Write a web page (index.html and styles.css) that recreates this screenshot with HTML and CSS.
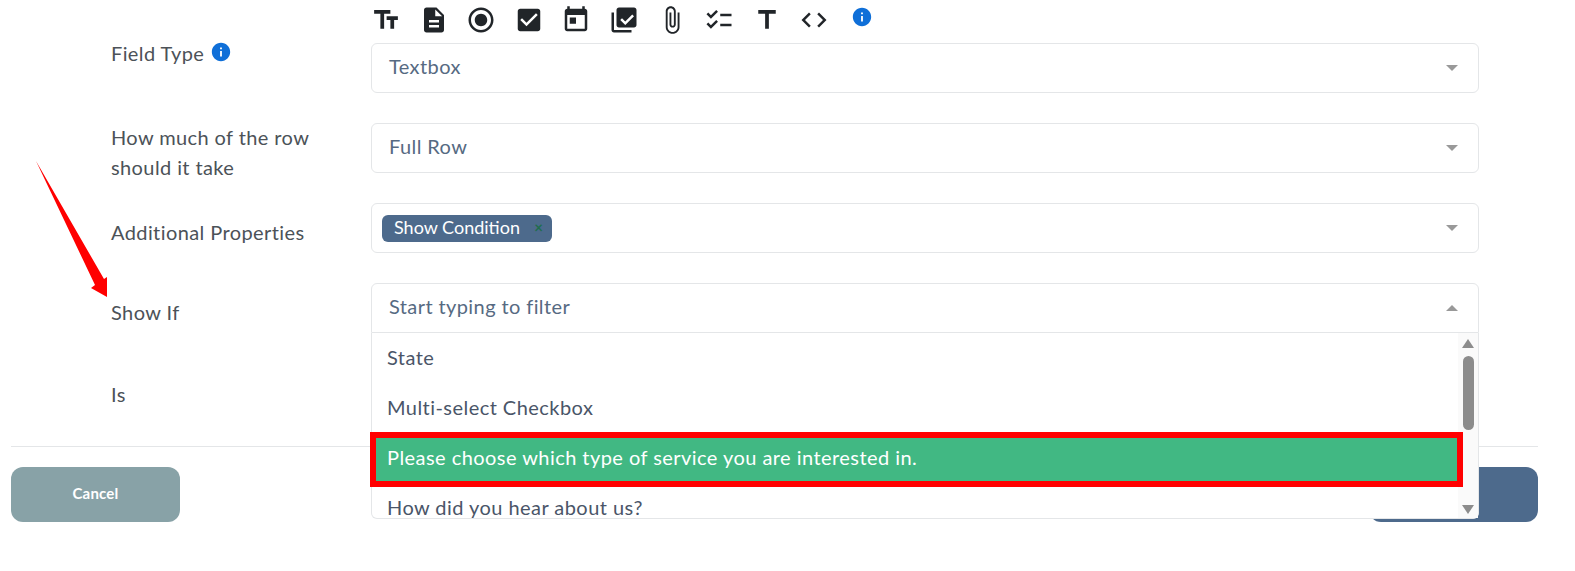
FILE: index.html
```html
<!DOCTYPE html>
<html lang="en">
<head>
    <meta charset="UTF-8">
    <meta name="viewport" content="width=device-width, initial-scale=1.0">
    <title>Field Settings</title>
    <link rel="stylesheet" href="styles.css">
</head>
<body>
    <div class="page">
        <div class="form-rows">
            <div class="form-row">
                <div class="field-label">Field Type
                    <svg class="info-icon" viewBox="0 0 24 24"><path d="M12 2C6.48 2 2 6.48 2 12s4.48 10 10 10 10-4.48 10-10S17.52 2 12 2zm1 15h-2v-6h2v6zm0-8h-2V7h2v2z"/></svg>
                </div>
                <div class="field-col">
                    <div class="type-icons">
                        <svg class="type-icon" viewBox="0 0 24 24"><path d="M2.5 4v3h5v12h3V7h5V4h-13zm19 5h-9v3h3v7h3v-7h3V9z"/></svg>
                        <svg class="type-icon" viewBox="0 0 24 24"><path d="M14 2H6c-1.1 0-1.99.9-1.99 2L4 20c0 1.1.89 2 1.99 2H18c1.1 0 2-.9 2-2V8l-6-6zm2 16H8v-2h8v2zm0-4H8v-2h8v2zm-3-5V3.5L18.5 9H13z"/></svg>
                        <svg class="type-icon" viewBox="0 0 24 24"><path d="M12 7c-2.76 0-5 2.24-5 5s2.24 5 5 5 5-2.24 5-5-2.24-5-5-5zm0-5C6.48 2 2 6.48 2 12s4.48 10 10 10 10-4.48 10-10S17.52 2 12 2zm0 18c-4.42 0-8-3.58-8-8s3.58-8 8-8 8 3.58 8 8-3.58 8-8 8z"/></svg>
                        <svg class="type-icon" viewBox="0 0 24 24"><path d="M19 3H5c-1.11 0-2 .9-2 2v14c0 1.1.89 2 2 2h14c1.11 0 2-.9 2-2V5c0-1.1-.89-2-2-2zm-9 14l-5-5 1.41-1.41L10 14.17l7.59-7.59L19 8l-9 9z"/></svg>
                        <svg class="type-icon" viewBox="0 0 24 24"><path fill-rule="evenodd" d="M7 1v2h10V1h2v2c1.1 0 2 .9 2 2v14c0 1.1-.9 2-2 2H5c-1.1 0-2-.9-2-2V5c0-1.1.9-2 2-2V1h2zM19 8H5v11h14V8zM7 10h5v5H7z"/></svg>
                        <svg class="type-icon" viewBox="0 0 24 24"><path d="M20 2H8c-1.1 0-2 .9-2 2v12c0 1.1.9 2 2 2h12c1.1 0 2-.9 2-2V4c0-1.1-.9-2-2-2zm-7 14l-4-4 1.41-1.41L13 13.17l5.59-5.59L20 9l-7 7zM4 6H2v14c0 1.1.9 2 2 2h14v-2H4V6z"/></svg>
                        <svg class="type-icon" viewBox="0 0 24 24"><path d="M16.5 6v11.5c0 2.21-1.79 4-4 4s-4-1.79-4-4V5c0-1.38 1.12-2.5 2.5-2.5s2.5 1.12 2.5 2.5v10.5c0 .55-.45 1-1 1s-1-.45-1-1V6H10v9.5c0 1.38 1.12 2.5 2.5 2.5s2.5-1.12 2.5-2.5V5c0-2.21-1.79-4-4-4S7 2.79 7 5v12.5c0 3.04 2.46 5.5 5.5 5.5s5.5-2.46 5.5-5.5V6h-1.5z"/></svg>
                        <svg class="type-icon" viewBox="0 0 24 24"><path d="M22 7h-9v2h9V7zm0 8h-9v2h9v-2zM5.54 11L2 7.46l1.41-1.41 2.12 2.12 4.24-4.24 1.41 1.41L5.54 11zm0 8L2 15.46l1.41-1.41 2.12 2.12 4.24-4.24 1.41 1.41L5.54 19z"/></svg>
                        <svg class="type-icon" viewBox="0 0 24 24"><path d="M5 4v3h5.5v12h3V7H19V4z"/></svg>
                        <svg class="type-icon" viewBox="0 0 24 24"><path d="M9.4 16.6L4.8 12l4.6-4.6L8 6l-6 6 6 6 1.4-1.4zm5.2 0l4.6-4.6-4.6-4.6L16 6l6 6-6 6-1.4-1.4z"/></svg>
                        <svg class="type-icon type-icon-info" viewBox="0 0 24 24"><path d="M12 2C6.48 2 2 6.48 2 12s4.48 10 10 10 10-4.48 10-10S17.52 2 12 2zm1 15h-2v-6h2v6zm0-8h-2V7h2v2z"/></svg>
                    </div>
                    <div class="select-box">
                        <span class="select-value">Textbox</span>
                        <span class="caret"></span>
                    </div>
                </div>
            </div>

            <div class="form-row">
                <div class="field-label">How much of the row should it take</div>
                <div class="field-col">
                    <div class="select-box">
                        <span class="select-value">Full Row</span>
                        <span class="caret"></span>
                    </div>
                </div>
            </div>

            <div class="form-row">
                <div class="field-label">Additional Properties</div>
                <div class="field-col">
                    <div class="select-box select-box-tags">
                        <span class="tag">Show Condition <span class="tag-remove">×</span></span>
                        <span class="caret"></span>
                    </div>
                </div>
            </div>

            <div class="form-row">
                <div class="field-label">Show If</div>
                <div class="field-col">
                    <div class="select-wrap">
                        <div class="select-box select-box-open">
                            <span class="select-value">Start typing to filter</span>
                            <span class="caret caret-up"></span>
                        </div>
                        <div class="dropdown">
                            <div class="option-list">
                                <div class="option">State</div>
                                <div class="option">Multi-select Checkbox</div>
                                <div class="option option-active">Please choose which type of service you are interested in.</div>
                                <div class="option">How did you hear about us?</div>
                            </div>
                            <div class="scrollbar">
                                <span class="scroll-arrow"></span>
                                <span class="scroll-thumb"></span>
                                <span class="scroll-arrow scroll-arrow-down"></span>
                            </div>
                            <div class="highlight-box"></div>
                        </div>
                    </div>
                </div>
            </div>

            <div class="form-row">
                <div class="field-label field-label-low">Is</div>
                <div class="field-col">
                    <div class="select-box"></div>
                </div>
            </div>
        </div>

        <div class="form-footer">
            <button class="btn btn-cancel">Cancel</button>
            <button class="btn btn-save">Save</button>
        </div>
    </div>

    <!-- red arrow drawn over the screenshot -->
    <svg class="pointer-arrow" viewBox="0 0 120 300"><polygon points="36,161 104,279 107,277 107,297 91,288 95,285"/></svg>
</body>
</html>
```

FILE: styles.css
```css
* {
    margin: 0;
    padding: 0;
    box-sizing: border-box;
}

body {
    background: #fff;
    color: #4c5258;
    font-family: "Lato", "Noto Sans", sans-serif;
    font-size: 20px;
    letter-spacing: 0.4px;
    overflow: hidden;
}

.page {
    width: 1527px;
    margin-left: 11px;
    padding-top: 5px;
}

.form-rows {
    display: flex;
    flex-direction: column;
    gap: 20px;
    padding: 0 59px 0 100px;
}

.form-row {
    display: grid;
    grid-template-columns: 260px 1fr;
    align-items: center;
}

.field-label {
    line-height: 30px;
    width: 215px;
    margin-top: -2px;
}

.field-label-low {
    padding-top: 3px;
}

.info-icon {
    width: 22px;
    height: 22px;
    fill: #0f6fd8;
    vertical-align: -2px;
}

.field-col {
    padding-bottom: 10px;
}

.type-icons {
    display: flex;
    height: 30px;
    margin-bottom: 8px;
    gap: 17.6px;
    align-items: center;
}

.type-icon {
    width: 30px;
    height: 30px;
    fill: #212529;
}

.type-icon-info {
    width: 22px;
    height: 22px;
    margin: -6px 0 0 4px;
    fill: #0f6fd8;
}

.select-box {
    display: flex;
    align-items: center;
    justify-content: space-between;
    height: 50px;
    padding: 0 20px 0 17px;
    border: 1px solid #e4e6e8;
    border-radius: 6px;
    background: #fff;
    color: #566a82;
}

.select-value {
    padding-bottom: 4px;
}

.select-box-tags {
    padding-left: 10px;
}

.select-box-open {
    border-bottom-left-radius: 0;
    border-bottom-right-radius: 0;
}

.select-wrap {
    position: relative;
}

.caret {
    width: 0;
    height: 0;
    border-left: 6px solid transparent;
    border-right: 6px solid transparent;
    border-top: 6px solid #999;
}

.caret-up {
    border-top: 0;
    border-bottom: 6px solid #999;
}

.tag {
    display: flex;
    align-items: center;
    justify-content: space-between;
    width: 170px;
    height: 27px;
    padding: 0 9px 2px 12px;
    border-radius: 6px;
    background: #4d6a8c;
    color: #fff;
    font-size: 18px;
    letter-spacing: 0;
}

.tag-remove {
    color: #1f6e4e;
    font-size: 15px;
    font-weight: 700;
}

.dropdown {
    position: absolute;
    top: 50px;
    left: 0;
    right: 0;
    z-index: 5;
    height: 186px;
    background: #fff;
    border: 1px solid #e4e6e8;
    border-top: 0;
    border-radius: 0 0 6px 6px;
}

.option-list {
    height: 100%;
    overflow: hidden;
}

.option {
    display: flex;
    align-items: center;
    height: 50px;
    padding: 0 0 2px 15px;
    color: #4a5568;
    letter-spacing: 0.45px;
}

.option-active {
    background: #41b883;
    color: #fff;
}

.scrollbar {
    position: absolute;
    top: 0;
    right: 0;
    bottom: 0;
    width: 20px;
    background: #fafafa;
    display: flex;
    flex-direction: column;
    align-items: center;
    padding: 6px 0 4px;
}

.scroll-arrow {
    width: 0;
    height: 0;
    border-left: 6.5px solid transparent;
    border-right: 6.5px solid transparent;
    border-bottom: 9px solid #8c8c8c;
}

.scroll-arrow-down {
    margin-top: auto;
    border-bottom: 0;
    border-top: 9px solid #8c8c8c;
}

.scroll-thumb {
    width: 11px;
    height: 74px;
    margin-top: 8px;
    border-radius: 6px;
    background: #8c8c8c;
}

.highlight-box {
    position: absolute;
    top: 99px;
    left: -2px;
    width: 1093px;
    height: 55px;
    border: 6px solid #f00;
}

.form-footer {
    display: flex;
    justify-content: space-between;
    margin-top: 23px;
    padding-top: 20px;
    border-top: 1px solid #e4e6e8;
}

.btn {
    width: 169px;
    height: 55px;
    padding-bottom: 4px;
    border: 0;
    border-radius: 12px;
    color: #fff;
    font-family: inherit;
    font-size: 15px;
    font-weight: 700;
    letter-spacing: 0.2px;
}

.btn-cancel {
    background: #88a2a7;
}

.btn-save {
    background: #4d6a8c;
}

.pointer-arrow {
    position: absolute;
    top: 0;
    left: 0;
    width: 120px;
    height: 300px;
    fill: #f00;
}
```
